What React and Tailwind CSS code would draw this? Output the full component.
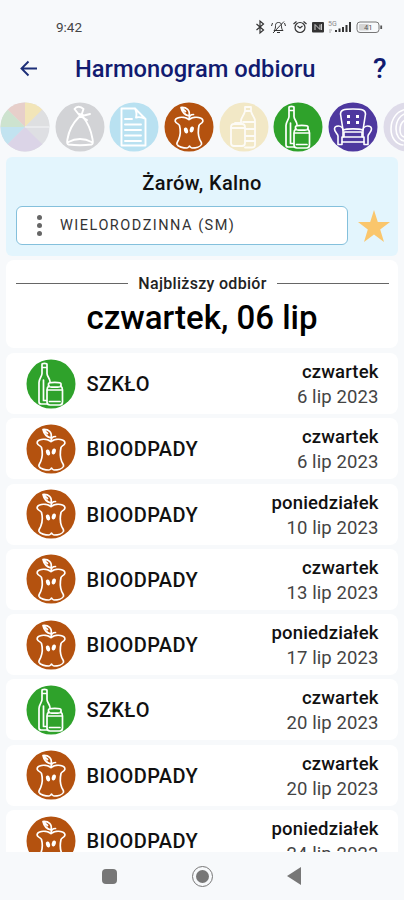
import React from "react";

const line = { fill: "none", stroke: "#fff", strokeLinecap: "round", strokeLinejoin: "round" };

function Disc({ color, children, className = "size-[50px]" }) {
  return (
    <svg viewBox="0 0 50 50" className={`shrink-0 ${className}`}>
      <circle cx="25" cy="25" r="24.5" fill={color} />
      {children}
    </svg>
  );
}

function Apple({ className }) {
  return (
    <Disc color="#b4520f" className={className}>
      <g {...line} strokeWidth="1.700">
        <path d="M25 17.500c-3-2-8-3-11.500-1.500-2.500 1-3 3-1.500 4.500 1.200 1.200 3 1.500 3.500 3 1.200 4.500.8 10-.8 14-.8 2-2.200 3-1.700 4.800.8 2.500 6.500 3.700 10 3.700 1 0 1.500-.8 2.500-1.800 1 1 1.500 1.800 2.500 1.800 3.500 0 8.500-1.200 9.500-3.700.5-1.800-1-2.800-1.800-4.800-1.600-4-1.700-9.500-.7-14 .5-1.500 2.200-1.800 3.200-3 1.300-1.500.8-3.500-1.700-4.500-3.500-1.500-8.500-.5-11.500 1.500z" />
        <path d="M25 17.500c0-3 1.500-5 4.500-5M25 14c-4-1-7-4-8-8.500 5.500-.5 9.500 2.500 8 8.500zM17 5.500l4.500 4" />
      </g>
      <ellipse cx="22" cy="28.500" rx="2" ry="3" transform="rotate(-15 22 28.500)" fill="#fff" />
      <ellipse cx="27.800" cy="27.500" rx="2" ry="3" transform="rotate(15 27.800 27.500)" fill="#fff" />
    </Disc>
  );
}

function Glass({ className }) {
  return (
    <Disc color="#2fa22b" className={className}>
      <g {...line} strokeWidth="1.700">
        <path d="M16 5.500c0-1.500 5-1.500 5 0v9c0 3 3 5 3 8M16 5.500v9c0 3-3 5-3 9V43c0 1.500 1 2 2.200 2h6M16 8.500h5M17.500 21v20.500h3" />
        <path d="M23 27c-2 1-2 2-2 4v12c0 2 1 3 3 3h9.500c2 0 3-1 3-3V31c0-2 0-3-2-4" />
        <path d="M22.500 24.800c0-1.800 12.500-1.800 12.500 0v2.400c0 1.300-12.500 1.300-12.500 0zM21.500 31H36M23.500 42.500H34" />
      </g>
    </Disc>
  );
}

function Mixed() {
  return (
    <Disc color="#dedfe3">
      <path d="M25 25V.5A24.500 24.500 0 0 0 7.700 7.700z" fill="#e7cfca" />
      <path d="M25 25V.5A24.500 24.500 0 0 1 42.300 7.700z" fill="#f2e5b8" />
      <path d="M25 25L42.300 7.700A24.500 24.500 0 0 1 49.500 25z" fill="#dedfe1" />
      <path d="M25 25L7.700 7.700A24.500 24.500 0 0 0 .5 25z" fill="#cde3cf" />
      <path d="M25 25H.5A24.500 24.500 0 0 0 7.700 42.300z" fill="#c2e3f0" />
      <path d="M25 25L7.700 42.300a24.500 24.500 0 0 0 34.600 0z" fill="#dbd4e7" />
      <path d="M25 25h24.500" stroke="#f4f5f7" />
    </Disc>
  );
}

function Bag() {
  return (
    <Disc color="#d2d3d6">
      <g {...line} strokeWidth="1.900">
        <path d="M24 15c-6 6-10 13-11.500 22-.5 3-1 5 1 5.500 7 1 16 1 23 0 2-.5 1.500-2.500 1-5.500C36 28 33 21 28 15zM13.500 40c7-4 16-4 23 0" />
        <path d="M25 14L19.500 7c2-3 6-3 9 0l-2 6M27 14l8-2M27 15l5 3M24 12l4 1" />
      </g>
    </Disc>
  );
}

function Paper() {
  return (
    <Disc color="#b9e1f1">
      <g {...line} strokeWidth="1.900">
        <path d="M12.500 6.500H26L36.500 17v26.500h-24zM26 6.500c2 4 2 6 1 9 4-1 6-.5 9.500 1.500" />
        <path d="M16 17h7M16 22.500h16M16 28h16M16 33.500h16M16 39h16" />
      </g>
    </Disc>
  );
}

function Plastic() {
  return (
    <Disc color="#f2e8c6">
      <g {...line} strokeWidth="1.800" opacity=".85">
        <path d="M26 5h6v4h-6zM26 9c-1 5-4 6-4 10v3M32 9c1 5 4 6 4 10v24c0 2-1 2.500-3 2.500h-7M24 20h12M27 27h9M27 34h9" />
        <rect x="12" y="22" width="14" height="22" rx="3" />
        <path d="M12 26h14M16 22v-1h6v1M26 39h10" />
      </g>
    </Disc>
  );
}

function Armchair() {
  return (
    <Disc color="#4e389f">
      <g {...line} strokeWidth="1.600">
        <path d="M15 28L12.500 12c0-4 3-5 12.500-5s12.500 1 12.500 5L35 28M16 30h18v5H16zM14 35h22v5H14z" />
        <path d="M14 40v2.500h-4V34c0-2-3.500-4-3.500-7 0-2 1.500-3 4-3s4.500 2 4.500 4.500V35M36 40v2.500h4V34c0-2 3.500-4 3.500-7 0-2-1.500-3-4-3S35 26 35 28.500V35" />
        <path d="M15.500 28c3-1.500 16-1.500 19 0" />
      </g>
      <path d="M19 13h3v3h-3zM28 13h3v3h-3zM19 19h3v3h-3zM28 19h3v3h-3z" fill="#fff" />
    </Disc>
  );
}

function Tire() {
  return (
    <Disc color="#dedbe9">
      <g {...line} strokeWidth="1.600">
        <path d="M25 7C14 8 8 17 8 27c0 9 5 15 12 16M25 11c-8 1-12 8-12 16 0 7 4 12 9 12M25 17c-5 1-8 5-8 11 0 4 2 7 5 7" />
      </g>
    </Disc>
  );
}

const pickups = [
  ["SZKŁO", "czwartek", "6 lip 2023"],
  ["BIOODPADY", "czwartek", "6 lip 2023"],
  ["BIOODPADY", "poniedziałek", "10 lip 2023"],
  ["BIOODPADY", "czwartek", "13 lip 2023"],
  ["BIOODPADY", "poniedziałek", "17 lip 2023"],
  ["SZKŁO", "czwartek", "20 lip 2023"],
  ["BIOODPADY", "czwartek", "20 lip 2023"],
  ["BIOODPADY", "poniedziałek", "24 lip 2023"],
];

function StatusIcons() {
  return (
    <svg viewBox="0 0 130 16" className="h-4 w-[130px]" fill="none" stroke="#333" strokeWidth="1.200">
      <path d="M2.500 5l7 6L6 14V2l3.500 3-7 6" />
      <path d="M20 11.500h9c-1.500-1.500-1.500-3-1.500-5 0-2-1-3-3-3s-3 1-3 3c0 2 0 3.500-1.500 5zM23 13.500h3M19 14L30 2.500M17.500 7l1-3M31.500 7l-1-3" strokeWidth="1" />
      <circle cx="46" cy="8.500" r="5" />
      <path d="M43.500 7l2.500 2 2.500-2M39.500 5l3-2.500M52.500 5l-3-2.500" />
      <rect x="58" y="3" width="12" height="10.500" rx="1" fill="#333" stroke="none" />
      <path d="M61 11V5.500l5 5V5.500M67.500 5v6" stroke="#ddd" strokeWidth=".9" />
      <path d="M82 13v-2M85.500 13v-3.500M89 13V8M92.500 13V6M96 13V3" strokeWidth="2" />
      <path d="M75 11h3M75 13h2" stroke="#999" strokeWidth=".8" />
      <rect x="103" y="3" width="22" height="10.500" rx="3" stroke="#777" strokeWidth="1" />
      <rect x="105" y="5" width="10" height="6.500" rx="1" fill="#d4d4d4" stroke="none" />
      <path d="M127.200 6.500v3.500" stroke="#555" strokeWidth="1.800" />
      <text x="74" y="7" fontSize="7" fill="#888" stroke="none">5G</text>
      <text x="110" y="11" fontSize="7.500" fill="#555" stroke="none">41</text>
    </svg>
  );
}

export default function App() {
  return (
    <div className="flex h-[900px] w-[404px] flex-col overflow-hidden bg-[#f7f9fb] font-[Roboto,sans-serif] text-[#111]">
      <div className="flex h-[42px] shrink-0 items-start justify-between pt-[19px] pr-[20px] pl-[56px]">
        <span className="text-[13.5px] leading-4 text-[#444]">9:42</span>
        <StatusIcons />
      </div>

      <header className="flex h-[60px] shrink-0 items-center pb-1.5 text-[#111b70]">
        <svg viewBox="0 0 18 18" className="ml-5 size-[18px]" fill="none" stroke="#1d2f78" strokeWidth="1.900">
          <path d="M17 8.500H2M8.500 1.500L1.500 8.500 8.500 15.500" />
        </svg>
        <h1 className="ml-[37px] w-[242px] whitespace-nowrap text-[23.7px] leading-7 font-medium">Harmonogram odbioru</h1>
        <span className="ml-[56px] text-[28px] leading-7 font-medium">?</span>
      </header>

      <div className="flex h-[50px] w-[440px] shrink-0 gap-[4.700px]">
        <Mixed />
        <Bag />
        <Paper />
        <Apple />
        <Plastic />
        <Glass />
        <Armchair />
        <Tire />
      </div>

      <section className="mx-1.5 mt-[5px] h-[99px] shrink-0 rounded-md bg-[#e3f5fd] pt-3.5">
        <h2 className="text-center text-[20px] leading-6 font-medium tracking-[0.35px]">Żarów, Kalno</h2>
        <div className="mt-[11px] flex items-center pl-2.5">
          <div className="flex h-[39px] w-[332px] items-center rounded-md border-[1.500px] border-[#84c0dc] bg-white pl-5">
            <div className="flex w-[5px] flex-col gap-[3px]">
              <i className="size-[5px] rounded-full bg-[#666]" />
              <i className="size-[5px] rounded-full bg-[#666]" />
              <i className="size-[5px] rounded-full bg-[#666]" />
            </div>
            <span className="ml-[18px] whitespace-nowrap text-[14.500px] tracking-[1.500px] text-[#333]">WIELORODZINNA (SM)</span>
          </div>
          <svg viewBox="0 0 32 32" className="ml-2.5 size-8">
            <path d="M16 0l3.800 12H32l-9.800 7.500L26 32l-10-7.500L6 32l3.800-12.500L0 12h12.200z" fill="#fac66c" />
          </svg>
        </div>
      </section>

      <section className="mx-1.5 mt-1 h-[88px] shrink-0 rounded-lg bg-white pt-[13px]">
        <div className="flex items-center gap-2.5 pr-[9px] pl-2.5">
          <div className="h-px flex-1 bg-[#666]" />
          <span className="pt-px text-[16px] leading-5 font-medium tracking-[0.3px] text-[#222]">Najbliższy odbiór</span>
          <div className="h-px flex-1 bg-[#666]" />
        </div>
        <p className="mt-1 text-center text-[33px] leading-10 font-medium text-black">czwartek, 06 lip</p>
      </section>

      <ul className="mx-1.5 mt-[5px] flex h-[499px] shrink-0 flex-col gap-[4.300px] overflow-hidden">
        {pickups.map(([name, day, date], i) => (
          <li key={i} className="flex h-[61px] shrink-0 items-center rounded-lg bg-white pr-[19.500px] pl-5">
            {name === "SZKŁO" ? <Glass className="size-[50px]" /> : <Apple className="size-[50px]" />}
            <span className="ml-[10.500px] pt-px text-[20px] font-medium tracking-[0.35px]">{name}</span>
            <div className="ml-auto pt-[3px] text-right leading-[25px]">
              <div className="text-[18.500px] font-medium tracking-[0.150px]">{day}</div>
              <div className="text-[18.500px] tracking-[0.100px] text-[#444]">{date}</div>
            </div>
          </li>
        ))}
      </ul>

      <nav className="flex flex-1 items-center">
        <div className="ml-[102px] size-[15px] rounded-sm bg-[#777]" />
        <div className="ml-[75px] flex size-[21px] items-center justify-center rounded-full border-[1.500px] border-[#777]">
          <div className="size-[13px] rounded-full bg-[#777]" />
        </div>
        <svg viewBox="0 0 14 18" className="ml-[74px] h-[18px] w-[14px]">
          <path d="M14 0v18L0 9z" fill="#777" />
        </svg>
      </nav>
    </div>
  );
}
